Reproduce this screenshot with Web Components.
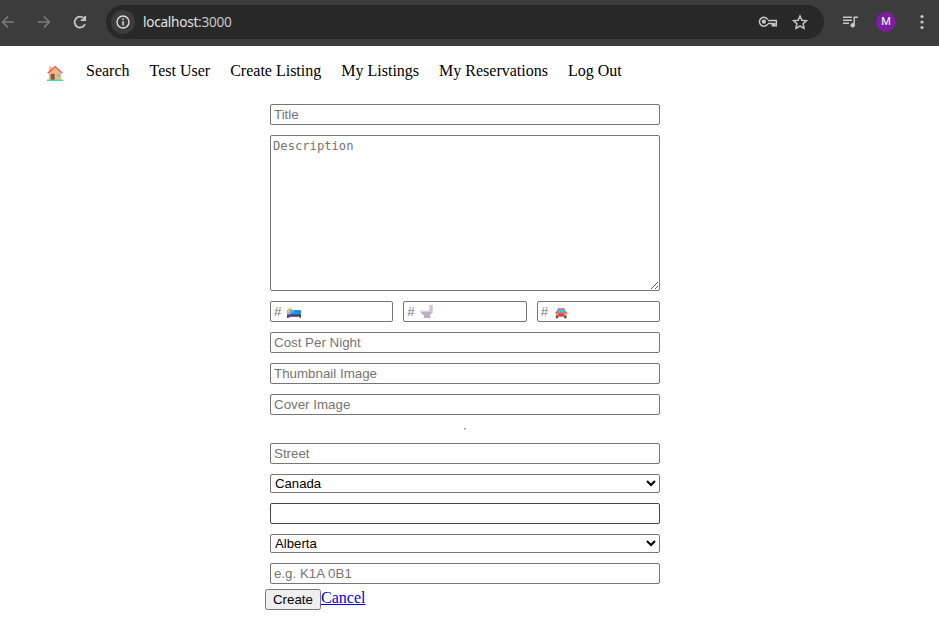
<!DOCTYPE html>
<html lang="en">
<head>
<meta charset="utf-8">
<title>Create Listing</title>
<style>
html,body{margin:0;height:100%;background:#fff;overflow:hidden}
body{font:16px "Liberation Serif","Times New Roman",serif;color:#000}
</style>
</head>
<body>
<browser-bar address="localhost:3000" initial="M"></browser-bar>
<site-nav>
  <nav-item><home-icon></home-icon></nav-item>
  <nav-item>Search</nav-item>
  <nav-item>Test User</nav-item>
  <nav-item>Create Listing</nav-item>
  <nav-item>My Listings</nav-item>
  <nav-item>My Reservations</nav-item>
  <nav-item>Log Out</nav-item>
</site-nav>
<listing-form></listing-form>
<script>
const define = (name, html) => customElements.define(name, class extends HTMLElement {
  constructor() {
    super();
    const get = k => this.getAttribute(k) || '';
    this.attachShadow({mode: 'open'}).innerHTML = typeof html === 'function' ? html(get) : html;
  }
});

define('browser-bar', get => `
<style>
:host{display:flex;align-items:center;height:46px;box-sizing:border-box;padding-bottom:2px;background:#3c3c3c;color:#c7c7c7}
svg{display:block;flex:none;overflow:visible}
.fwd{margin-left:20px}.reload{margin-left:20px}
.dim{color:#7b7b7b}
.omni{display:flex;align-items:center;width:718px;height:34px;margin-left:18px;border-radius:17px;background:#282828;box-sizing:border-box;padding:0 15px 0 5px;flex:none}
.info{width:24px;height:24px;border-radius:50%;background:#3c3c3c;display:grid;place-items:center;color:#dedede}
.url{flex:1;margin-left:8px;padding-bottom:2px;font:13.6px "Noto Sans",sans-serif;letter-spacing:-.26px;color:#e3e3e3;white-space:nowrap}
.url span{color:#c7c7c7}
.star{margin-left:14px}.queue{margin-left:18px}
.avatar{width:20px;height:20px;border-radius:50%;background:#7b1fa2;color:#fff;font:400 11px/20px Roboto,sans-serif;text-align:center;margin-left:18px;flex:none}
.dots{margin-left:17px}
</style>
<svg class="dim" width="16" height="16" viewBox="0 0 16 16" fill="none" stroke="currentColor" stroke-width="1.6"><path d="M14 8H2.8M8 2.6 2.6 8 8 13.4"/></svg>
<svg class="fwd dim" width="16" height="16" viewBox="0 0 16 16" fill="none" stroke="currentColor" stroke-width="1.6"><path d="M2 8h11.2M8 2.6 13.4 8 8 13.4"/></svg>
<svg class="reload" width="16" height="16" viewBox="0 0 16 16" fill="none" stroke="currentColor" stroke-width="1.8"><path d="M13 10a5.4 5.4 0 1 1-.8-5.2L13.2 6M13.2 1.9V6.2H8.8"/></svg>
<div class="omni">
  <div class="info"><svg width="14" height="14" viewBox="0 0 14 14"><circle cx="7" cy="7" r="6" fill="none" stroke="currentColor" stroke-width="1.4"/><path fill="currentColor" d="M6.3 6.2h1.5v4.3H6.3zM6.3 3.6h1.5v1.5H6.3z"/></svg></div>
  <div class="url">${get('address').replace(/(:\d+)/, '<span>$1</span>')}</div>
  <svg width="18" height="12" viewBox="0 0 18 12" fill="none" stroke="currentColor" stroke-width="1.5"><path d="M8.7 3.6A4.4 4.4 0 1 0 8.7 7.9M9 4.4h8.3v5.4h-3.9V7.6H9"/><circle cx="4.9" cy="5.7" r="2.1" fill="currentColor" stroke="none"/><path fill="currentColor" stroke="none" d="M13.4 7h3v2.8h-3z"/></svg>
  <svg class="star" width="18" height="16" viewBox="0 0 18 16" fill="none" stroke="currentColor" stroke-width="1.5"><path d="m9 2.1 1.9 4.1 4.5.5-3.3 3.1.9 4.4L9 12l-4 2.2.9-4.4L2.6 6.7l4.5-.5z"/></svg>
</div>
<svg class="queue" width="16" height="14" viewBox="0 0 16 14" stroke="currentColor" stroke-width="1.5" fill="none"><path d="M1 2.3h9M1 5.3h9M1 8.3h6M12.2 10.2V2.3H16"/><circle cx="10.7" cy="10.3" r="2.2" fill="currentColor" stroke="none"/></svg>
<div class="avatar">${get('initial')}</div>
<svg class="dots" width="18" height="16" viewBox="0 0 18 16" fill="currentColor"><circle cx="9" cy="2.5" r="1.6"/><circle cx="9" cy="8" r="1.6"/><circle cx="9" cy="13.5" r="1.6"/></svg>`);

define('site-nav', `
<style>:host{display:flex;gap:20px;height:20px;padding:16px 0 0 46px;color:#000}</style><slot></slot>`);
define('nav-item', `
<style>:host{display:block;line-height:18px;white-space:nowrap;font-size:16px}</style><slot></slot>`);
define('home-icon', `
<style>:host{display:block;width:20px;height:20px}svg{display:block}</style>
<svg width="20" height="20" viewBox="0 0 20 20">
<path fill="#f9b27a" d="M3.2 4.5h2.4v6H3.2z"/><path fill="#f3b87c" d="m9 5.5 6 5.5v7H3v-7z"/>
<path fill="#8b5549" d="M4.7 11.8h4V18h-4z"/><path fill="#75c6f2" d="M10.7 11.8h3.3v3.2h-3.3z"/>
<path d="m1.7 11.2 7.3-6.6 7.3 6.6" fill="none" stroke="#f5494d" stroke-width="1.4"/><path fill="#37e39a" d="M1 17.6h16V19H1z"/></svg>`);

const pictures = {
  bed: `<path fill="#c9a0dc" d="M1 5h3v8H1z"/><path fill="#f6b85c" d="m4 2.5 1 1.3 1.5.4v3H2V4.3z"/><path fill="#1c8fe8" d="M5 5h9a1 1 0 0 1 1 1v4H4z"/><path fill="#39b5f6" d="M5 5h3v3H4z"/><path fill="#533566" d="M1 9.5h14v3.3h-1.5v-1h-11v1H1z"/>`,
  toilet: `<path fill="#cec4d4" d="M10.3 0h3.4v8h-3.4z"/><path fill="#d9d0de" d="M1.3 5.5h9.5v2H1.3z"/><path fill="#bcb1c4" d="M1.8 7h11.7L11 10.3l.5 2.7H4.6l.5-2.5Q2.4 9.6 1.8 7z"/>`,
  car: `<g transform="translate(.8 .3)"><path fill="#f15b50" d="M4.2 3h6.3l2 4.2v4.2H2.3V7.2z"/><path fill="#35c5f4" d="M4.5 4.2h5.8l1.3 3H3.2z"/><path fill="#f36a48" d="M1.3 6.5h2l.5 1H11l.5-1h2v1l-1 .7v3H2.3v-3l-1-.7z"/><path fill="#a53748" d="M4.9 9h5v1.3h-5z"/><path fill="#433450" d="M2 11h2.3v1.9H2zM10.4 11h2.3v1.9h-2.3z"/><path fill="#ffd0b0" d="M2.7 8.5h1.4v1H2.7zM10.7 8.5h1.4v1h-1.4z"/></g>`
};
define('text-field', get => `
<style>
:host{display:block;position:relative;flex:1;min-width:0}
input{display:block;width:100%;height:21px;box-sizing:border-box;margin:0;padding:1px 2px 1px 3px;border:1px solid ${get('tone') || '#767676'};border-radius:2px;background:#fff;color:#000;font:13.333px "Liberation Sans",Arial,sans-serif;outline:none}
input::placeholder{color:#757575;opacity:1}
svg{position:absolute;left:16px;top:4px;width:15px;height:14px}
</style>
<input placeholder="${get('placeholder')}" aria-label="${get('placeholder')}">
${get('picture') ? `<svg viewBox="0 0 15 14">${pictures[get('picture')]}</svg>` : ''}`);
define('text-box', get => `
<style>
:host{display:block}
textarea{display:block;width:100%;height:156px;box-sizing:border-box;margin:0;padding:2px;border:1px solid #767676;border-radius:2px;background:#fff;font:12.17px/16px "DejaVu Sans Mono",monospace;resize:both;outline:none}
textarea::placeholder{color:#757575;opacity:1}
</style><textarea placeholder="${get('placeholder')}"></textarea>`);
define('choice-field', get => `
<style>
:host{display:block}
select{display:block;width:100%;height:19px;box-sizing:border-box;margin:0;padding:0 1px 0 0;border:1px solid #767676;border-radius:2px;background:#fff;color:#000;font:13.2px "Liberation Sans",Arial,sans-serif}
</style><select><option>${get('value')}</option></select>`);
define('form-row', `<style>:host{display:flex;gap:10px}</style><slot></slot>`);
define('form-actions', `
<style>
:host{display:flex;align-items:flex-start;margin:-5px 0 0 -5px}
button{display:block;width:56px;height:21px;padding:0;box-sizing:border-box;border:1px solid #767676;border-radius:2.5px;background:#efefef;color:#000;font:13.333px "Liberation Sans",Arial,sans-serif}
a{color:#0000ee;line-height:18px;font-size:16px;text-decoration:underline}
</style><button>Create</button><a href="#">Cancel</a>`);
define('listing-form', `
<style>
:host{display:flex;flex-direction:column;gap:10px;width:390px;margin:22px 0 0 270px}
hr{box-sizing:border-box;width:2px;height:2px;margin:3px auto;border:1px solid;border-color:#9a9a9a #d8d8d8 #e4e4e4 #9a9a9a}
</style>
<text-field placeholder="Title"></text-field>
<text-box placeholder="Description"></text-box>
<form-row>
  <text-field placeholder="#" picture="bed"></text-field>
  <text-field placeholder="#" picture="toilet"></text-field>
  <text-field placeholder="#" picture="car"></text-field>
</form-row>
<text-field placeholder="Cost Per Night"></text-field>
<text-field placeholder="Thumbnail Image"></text-field>
<text-field placeholder="Cover Image"></text-field>
<hr>
<text-field placeholder="Street"></text-field>
<choice-field value="Canada"></choice-field>
<text-field tone="#454545"></text-field>
<choice-field value="Alberta"></choice-field>
<text-field placeholder="e.g. K1A 0B1"></text-field>
<form-actions></form-actions>`);
</script>
</body>
</html>
